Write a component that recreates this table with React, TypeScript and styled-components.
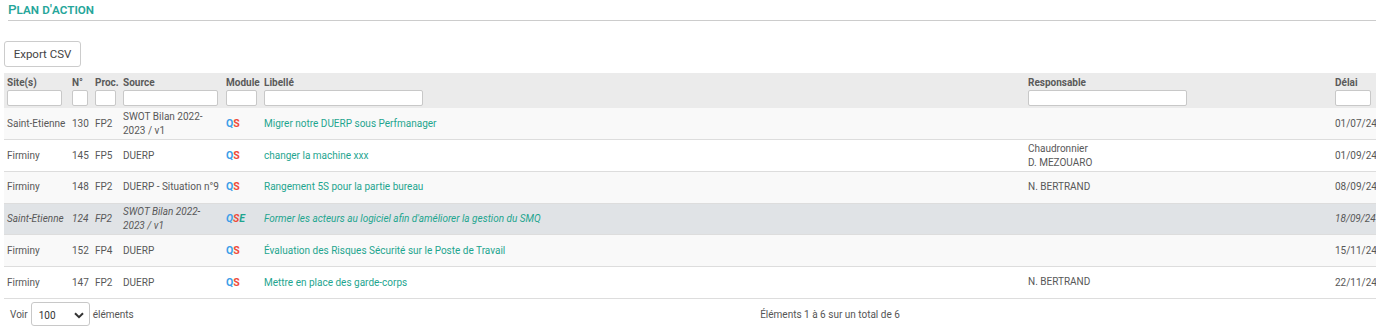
import * as React from 'react'
import styled, { createGlobalStyle } from 'styled-components'

type Row = {
    site: string
    num: number
    proc: string
    source: string
    modules: string
    label: string
    resp: string[]
    delay: string
    active?: boolean
}

const rows: Row[] = [
    { site: 'Saint-Etienne', num: 130, proc: 'FP2', source: 'SWOT Bilan 2022-2023 / v1', modules: 'QS', label: 'Migrer notre DUERP sous Perfmanager', resp: [], delay: '01/07/24' },
    { site: 'Firminy', num: 145, proc: 'FP5', source: 'DUERP', modules: 'QS', label: 'changer la machine xxx', resp: ['Chaudronnier', 'D. MEZOUARO'], delay: '01/09/24' },
    { site: 'Firminy', num: 148, proc: 'FP2', source: 'DUERP - Situation n°9', modules: 'QS', label: 'Rangement 5S pour la partie bureau', resp: ['N. BERTRAND'], delay: '08/09/24' },
    { site: 'Saint-Etienne', num: 124, proc: 'FP2', source: 'SWOT Bilan 2022-2023 / v1', modules: 'QSE', label: "Former les acteurs au logiciel afin d'améliorer la gestion du SMQ", resp: [], delay: '18/09/24', active: true },
    { site: 'Firminy', num: 152, proc: 'FP4', source: 'DUERP', modules: 'QS', label: 'Évaluation des Risques Sécurité sur le Poste de Travail', resp: [], delay: '15/11/24' },
    { site: 'Firminy', num: 147, proc: 'FP2', source: 'DUERP', modules: 'QS', label: 'Mettre en place des garde-corps', resp: ['N. BERTRAND'], delay: '22/11/24' },
]

const columns = [
    { title: 'Site(s)', width: 65, input: 55 },
    { title: 'N°', width: 23, input: 16 },
    { title: 'Proc.', width: 28, input: 21 },
    { title: 'Source', width: 103, input: 95 },
    { title: 'Module', width: 38, input: 31 },
    { title: 'Libellé', width: 764, input: 159 },
    { title: 'Responsable', width: 307, input: 159 },
    { title: 'Délai', width: 44, input: 36 },
]

const moduleColors: Record<string, string> = {
    Q: '#3d9ee8',
    S: '#ee4b3b',
    E: '#1ea58f',
}

const App = (): JSX.Element => {
    return (
        <Page>
            <GlobalStyle />
            <Title>Plan d'action</Title>
            <ExportButton>Export CSV</ExportButton>
            <Table>
                <colgroup>
                    {columns.map((c) => (
                        <col key={c.title} style={{ width: c.width }} />
                    ))}
                </colgroup>
                <thead>
                    <tr>
                        {columns.map((c) => (
                            <HeadCell key={c.title}>
                                <HeadLabel>{c.title}</HeadLabel>
                                <FilterInput style={{ width: c.input }} />
                            </HeadCell>
                        ))}
                    </tr>
                </thead>
                <tbody>
                    {rows.map((r, i) => (
                        <BodyRow key={r.num} $striped={i % 2 === 0} $active={!!r.active}>
                            <Cell>{r.site}</Cell>
                            <Cell>{r.num}</Cell>
                            <Cell>{r.proc}</Cell>
                            <Cell>{r.source}</Cell>
                            <Cell>
                                <Modules>
                                    {r.modules.split('').map((m, k) => (
                                        <span key={k} style={{ color: moduleColors[m] }}>
                                            {m}
                                        </span>
                                    ))}
                                </Modules>
                            </Cell>
                            <Cell>
                                <Label>{r.label}</Label>
                            </Cell>
                            <Cell>
                                {r.resp.map((p) => (
                                    <RespLine key={p}>{p}</RespLine>
                                ))}
                            </Cell>
                            <DateCell>{r.delay}</DateCell>
                        </BodyRow>
                    ))}
                </tbody>
            </Table>
            <Footer>
                <Length>
                    Voir
                    <SelectBox>
                        <span>100</span>
                        <svg width="10" height="7" viewBox="0 0 10 7">
                            <path d="M1 1.2l4 4 4-4" fill="none" stroke="#333" strokeWidth="2" />
                        </svg>
                    </SelectBox>
                    éléments
                </Length>
                <Info>Éléments 1 à 6 sur un total de 6</Info>
            </Footer>
        </Page>
    )
}

const GlobalStyle = createGlobalStyle`
    body {
        margin: 0;
        background: #ffffff;
        font-family: Roboto, "Liberation Sans", Arial, sans-serif;
        color: #555555;
    }
`
const Page = styled.div`
    padding: 0 0 0 4px;
    font-size: 10px;
`
const Title = styled.h1`
    margin: 0 0 0 4px;
    padding: 2px 0 4px;
    font-size: 13.5px;
    font-weight: 500;
    font-variant: small-caps;
    color: #26a69a;
    line-height: 14px;
    border-bottom: 1px solid #cccccc;
`
const ExportButton = styled.button`
    display: block;
    margin: 20px 0 6px;
    width: 77px;
    height: 26px;
    padding: 0;
    background: #ffffff;
    border: 1px solid #cccccc;
    border-radius: 3px;
    font-family: Roboto, "Liberation Sans", Arial, sans-serif;
    font-size: 11.5px;
    color: #444444;
`
const Table = styled.table`
    width: 1372px;
    table-layout: fixed;
    border-collapse: collapse;
`
const HeadCell = styled.th`
    background: #ebebeb;
    padding: 3px 3px 2px;
    text-align: left;
    vertical-align: top;
    height: 30px;
`
const HeadLabel = styled.div`
    font-size: 10px;
    font-weight: 700;
    line-height: 13px;
    color: #5a5a5a;
    white-space: nowrap;
`
const FilterInput = styled.input`
    display: block;
    box-sizing: border-box;
    height: 16px;
    margin: 1px 0 0;
    padding: 0 2px;
    border: 1px solid #c8c8c8;
    border-radius: 2px;
    background: #ffffff;
`
const BodyRow = styled.tr<{ $striped: boolean; $active: boolean }>`
    background: ${(p) => (p.$active ? '#e0e3e6' : p.$striped ? '#f9f9f9' : '#ffffff')};
    font-style: ${(p) => (p.$active ? 'italic' : 'normal')};
    border-bottom: 1px solid #dddddd;
    height: 31.7px;
`
const Cell = styled.td`
    padding: 1px 3px;
    line-height: 13.5px;
    vertical-align: middle;
    color: #585858;
`
const DateCell = styled(Cell)`
    text-align: right;
    padding-right: 2px;
    white-space: nowrap;
`
const Modules = styled.span`
    font-weight: 700;
    font-size: 10.5px;
`
const Label = styled.span`
    color: #1ea58f;
`
const RespLine = styled.div`
    line-height: 14px;
`
const Footer = styled.div`
    display: grid;
    grid-template-columns: 280px 1fr;
    align-items: center;
    height: 31px;
`
const Length = styled.div`
    display: flex;
    align-items: center;
    gap: 3px;
    padding-left: 6px;
`
const SelectBox = styled.div`
    box-sizing: border-box;
    display: flex;
    align-items: center;
    justify-content: space-between;
    width: 59px;
    height: 24px;
    padding: 3px 5px 0 7px;
    border: 1px solid #c8c8c8;
    border-radius: 3px;
    color: #333333;
`
const Info = styled.div`
    text-align: center;
`

export default App
